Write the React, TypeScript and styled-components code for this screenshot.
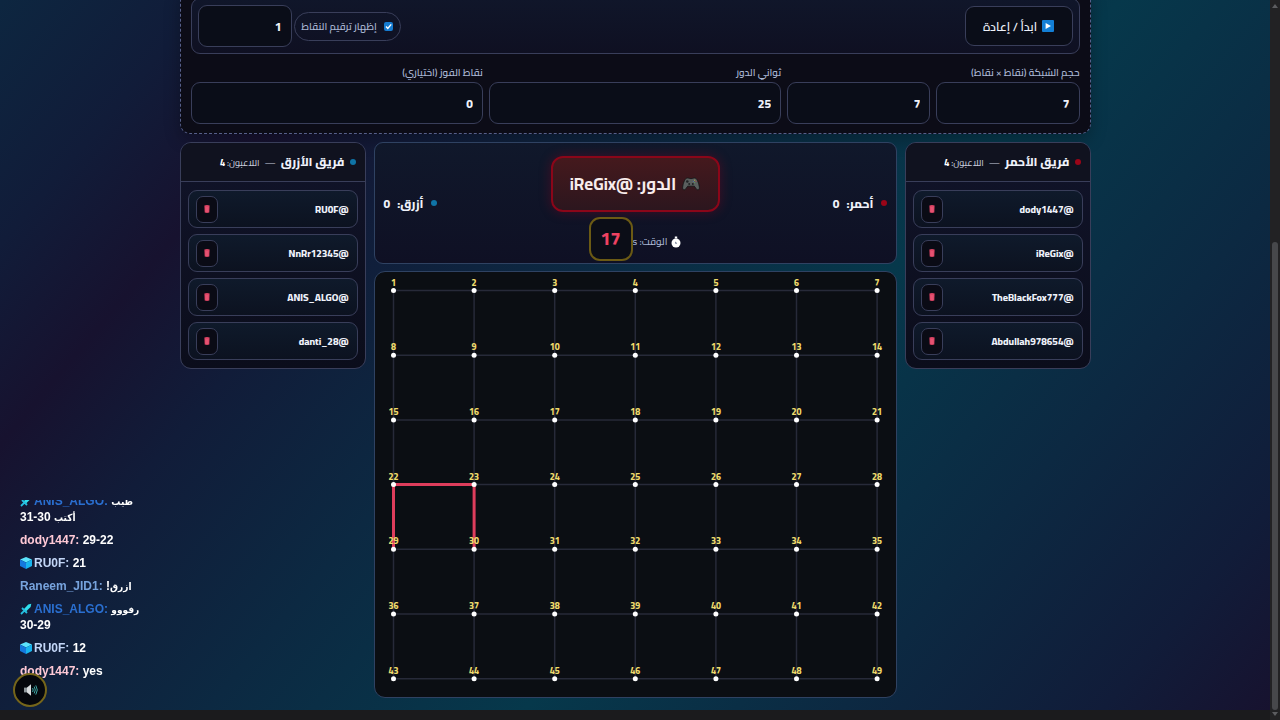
import React from "react";
import styled, { createGlobalStyle } from "styled-components";

const line = "#393e5a";
const uiFont = `"Cairo", "Open Sans", "Noto Sans", "DejaVu Sans", sans-serif`;

const GlobalStyle = createGlobalStyle`
  * { box-sizing: border-box; }
  html, body { margin: 0; background: #1b1b1d; }
  body { font-family: ${uiFont}; color: #eef1fa; }
  button, input { font-family: inherit; color: inherit; }
`;

const Shell = styled.div`
  display: grid;
  grid-template-columns: minmax(0, 1fr) 10px;
  grid-template-rows: minmax(0, 1fr) 10px;
  min-height: 100vh;
  overflow: hidden;
`;

const Page = styled.div`
  overflow: hidden;
  background: linear-gradient(
    130deg,
    #06384b -20%,
    #0c2942 -3%,
    #111c39 11%,
    #17122f 20%,
    #111c39 29%,
    #0c2942 43%,
    #06384b 60%,
    #0c2942 77%,
    #111c39 91%,
    #17122f 100%
  );
`;

const ScrollTrack = styled.div`
  grid-row: 1 / span 2;
  grid-column: 2;
  display: flex;
  flex-direction: column;
  align-items: center;
  justify-content: space-between;
  background: #222224;
  padding: 4px 0;
`;

const ScrollThumb = styled.div`
  flex: 1;
  width: 6px;
  margin: 234px 0 2px;
  border-radius: 3px;
  background: #47484b;
`;

const Main = styled.main`
  direction: rtl;
  width: calc(100% - 32px);
  max-width: 911px;
  margin: -13px auto 0;
  padding-bottom: 12px;
  display: flex;
  flex-direction: column;
  gap: 8px;
`;

const Settings = styled.section`
  display: flex;
  flex-direction: column;
  gap: 10px;
  padding: 10px 10px 9px;
  border: 1px dashed #565f8a;
  border-radius: 10px;
  background: #0c0c17;
  box-shadow: 0 6px 16px rgba(0, 0, 0, 0.25);
`;

const Toolbar = styled.div`
  display: flex;
  align-items: center;
  gap: 2px;
  padding: 6px;
  border: 1px solid ${line};
  border-radius: 9px;
  background: linear-gradient(#10162a, #0f1022);
`;

const Spacer = styled.div`
  flex: 1;
`;

const StartButton = styled.button`
  display: flex;
  align-items: center;
  justify-content: center;
  gap: 5px;
  width: 108px;
  height: 40px;
  padding: 0;
  border: 1px solid ${line};
  border-radius: 9px;
  background: #0a0d18;
  font-size: 12px;
  font-weight: 600;
  white-space: nowrap;
`;

const CheckPill = styled.label`
  display: flex;
  align-items: center;
  justify-content: center;
  gap: 7px;
  width: 107px;
  height: 29px;
  border: 1px solid ${line};
  border-radius: 15px;
  color: #a9b6d3;
  font-size: 10px;
  font-weight: 600;
  white-space: nowrap;
`;

const Check = styled.input`
  appearance: none;
  width: 9px;
  height: 9px;
  margin: 0;
  border-radius: 2px;
  background: #157bd0
    url("data:image/svg+xml,%3Csvg xmlns='http://www.w3.org/2000/svg' viewBox='0 0 9 9'%3E%3Cpath d='M2 4.6 3.8 6.5 7.2 2.4' fill='none' stroke='white' stroke-width='1.4'/%3E%3C/svg%3E");
`;

const NumberBox = styled.input<{ $width?: string }>`
  width: ${(p) => p.$width ?? "100%"};
  min-width: 0;
  height: 42px;
  padding: 0 9px;
  border: 1px solid ${line};
  border-radius: 9px;
  background: #0a0d18;
  font-size: 12px;
  font-weight: 800;
  text-align: right;
`;

const Fields = styled.div`
  display: grid;
  grid-template-columns: repeat(3, minmax(0, 1fr));
  gap: 6px;
`;

const Field = styled.div`
  display: flex;
  flex-direction: column;
`;

const FieldLabel = styled.label`
  height: 18px;
  color: #a9b6d3;
  font-size: 10px;
  font-weight: 600;
  line-height: 18px;
  white-space: nowrap;
`;

const Pair = styled.div`
  display: grid;
  grid-template-columns: 1fr 1fr;
  gap: 6px;
`;

const Columns = styled.div`
  display: grid;
  grid-template-columns: 186px minmax(0, 1fr) 186px;
  align-items: start;
  gap: 8px;
`;

const TeamCard = styled.section`
  border: 1px solid ${line};
  border-radius: 11px;
  background: linear-gradient(#11142a, #0b0d1b);
`;

const TeamHeader = styled.header`
  display: flex;
  align-items: center;
  gap: 5px;
  height: 39px;
  padding: 0 9px;
  border-bottom: 1px solid ${line};
  border-radius: 10px 10px 0 0;
  background: #10121f;
  white-space: nowrap;
`;

const Dot = styled.span<{ $color: string }>`
  flex: none;
  width: 6px;
  height: 6px;
  border-radius: 50%;
  background: ${(p) => p.$color};
`;

const TeamName = styled.h2`
  margin: 0;
  font-size: 12px;
  line-height: 20px;
  font-weight: 800;
`;

const TeamDash = styled.span`
  color: #c9cede;
  font-size: 10px;
`;

const TeamCount = styled.span`
  color: #c9cede;
  font-size: 9px;
  font-weight: 500;

  b {
    color: #ffffff;
    font-weight: 800;
  }
`;

const Players = styled.ul`
  display: flex;
  flex-direction: column;
  gap: 6px;
  margin: 0;
  padding: 8px 7px;
  list-style: none;
`;

const Player = styled.li`
  display: flex;
  align-items: center;
  justify-content: space-between;
  height: 38px;
  padding: 0 8px 0 7px;
  border: 1px solid ${line};
  border-radius: 9px;
  background: linear-gradient(#0f1a2b, #0c1220);
  font-size: 10px;
  font-weight: 800;
`;

const DeleteButton = styled.button`
  display: flex;
  align-items: center;
  justify-content: center;
  width: 22px;
  height: 27px;
  padding: 0;
  border: 1px solid ${line};
  border-radius: 7px;
  background: #0a0b15;
`;

const Center = styled.div`
  display: flex;
  flex-direction: column;
  gap: 7px;
`;

const Status = styled.section`
  display: grid;
  grid-template-columns: 1fr auto 1fr;
  align-items: center;
  height: 122px;
  padding: 0 9px;
  border: 1px solid #2f4262;
  border-radius: 9px;
  background: linear-gradient(#10182b, #0f1024);
`;

const Score = styled.div<{ $end?: boolean }>`
  display: flex;
  align-items: center;
  justify-content: ${(p) => (p.$end ? "flex-end" : "flex-start")};
  gap: 7px;
  font-size: 12px;
  font-weight: 800;
`;

const TurnStack = styled.div`
  display: flex;
  flex-direction: column;
  align-items: center;
  gap: 5px;
  padding-top: 10px;
`;

const Turn = styled.div`
  display: flex;
  align-items: center;
  justify-content: center;
  gap: 6px;
  min-width: 169px;
  height: 56px;
  padding: 0 16px;
  border: 2px solid #8b0619;
  border-radius: 12px;
  background: linear-gradient(#45191d, #2c161e);
  box-shadow: 0 0 12px rgba(160, 0, 30, 0.35);
  color: #f8ecec;
  font-size: 17px;
  font-weight: 700;
  white-space: nowrap;
`;

const Timer = styled.div`
  display: flex;
  align-items: center;
  color: #a9b6d3;
  font-size: 10px;
  font-weight: 500;
`;

const TimerText = styled.span`
  display: flex;
  align-items: center;
  gap: 4px;
  padding-top: 6px;
`;

const Seconds = styled.strong`
  display: grid;
  place-items: center;
  width: 44px;
  height: 44px;
  border: 2px solid #6b5a14;
  border-radius: 11px;
  background: #0b0d17;
  color: #ee4262;
  font-size: 18px;
  font-weight: 800;
`;

const Board = styled.section`
  border: 1px solid #2f4262;
  border-radius: 11px;
  background: #0b0e13;

  svg {
    display: block;
    width: 100%;
    height: auto;
    font-family: ${uiFont};
    font-size: 9px;
    font-weight: 800;
  }
`;

const Chat = styled.div`
  position: fixed;
  left: 20px;
  bottom: 41px;
  display: flex;
  flex-direction: column;
  justify-content: flex-end;
  gap: 7px;
  width: 140px;
  height: 179px;
  overflow: hidden;
  font: 700 12px/16px "Liberation Sans", "DejaVu Sans", sans-serif;
  color: #ffffff;
`;

const Message = styled.p`
  flex: none;
  margin: 0;

  svg {
    margin-right: 2px;
    vertical-align: -2px;
  }
`;

const Nick = styled.span<{ $color: string }>`
  color: ${(p) => p.$color};
`;

const Arabic = styled.span`
  font-family: "DejaVu Sans Condensed", "DejaVu Sans", sans-serif;
  font-size: 10px;
  line-height: 1;
`;

const SoundButton = styled.button`
  position: fixed;
  left: 13px;
  bottom: 13px;
  display: grid;
  place-items: center;
  width: 34px;
  height: 34px;
  padding: 0;
  border: 2px solid #75651a;
  border-radius: 50%;
  background: #05070d;
`;

const PlayIcon = () => (
  <svg width="12" height="12" viewBox="0 0 12 12" aria-hidden="true">
    <rect width="12" height="12" rx="1" fill="#137fd6" />
    <path d="M3.6 3v6l5.4-3z" fill="#fff" />
  </svg>
);

const TrashIcon = () => (
  <svg width="8" height="10" viewBox="0 0 8 10" aria-hidden="true">
    <path d="M1.4 1.6Q4 .6 6.600 1.600L6.300 8.600Q4 9.400 1.700 8.600z" fill="#df4566" />
    <path d="M3.200 3v5M4.800 3v5" stroke="#ee6f8a" strokeWidth=".5" />
  </svg>
);

const GamepadIcon = () => (
  <svg width="18" height="14" viewBox="0 0 18 14" aria-hidden="true">
    <path
      d="M4.5 1.2C6 .6 7 1.6 9 1.6s3-1 4.5-.4c2 .8 3.6 6 3.9 9.200.2 2.600-2 3.200-3.300 1.300L12.300 9.200H5.700L3.900 11.700C2.600 13.600.4 13 .6 10.400.9 7.200 2.500 2 4.500 1.200z"
      fill="#5a5f5e"
      stroke="#151718"
      strokeWidth=".9"
    />
    <circle cx="5.300" cy="4.500" r="1.300" fill="#202425" />
    <circle cx="7.200" cy="7" r="1" fill="#202425" />
    <circle cx="10.800" cy="7" r="1" fill="#202425" />
    <circle cx="12.700" cy="3.200" r=".6" fill="#b8a748" />
    <circle cx="14" cy="4.500" r=".6" fill="#b5484c" />
    <circle cx="12.700" cy="5.700" r=".6" fill="#5c9a62" />
    <circle cx="11.400" cy="4.500" r=".6" fill="#5279a8" />
  </svg>
);

const StopwatchIcon = () => (
  <svg width="10" height="12" viewBox="0 0 10 12" aria-hidden="true">
    <path d="M3.800.5h2.400v2H3.800z" fill="#fff" />
    <circle cx="5" cy="7" r="4.500" fill="#fff" />
    <path d="M4 5.400 6.200 7.200 4.600 8z" fill="#55617c" />
  </svg>
);

const CubeIcon = () => (
  <svg width="12" height="12" viewBox="0 0 12 12" aria-hidden="true">
    <path d="M6 0 12 2.600 6 5.400 0 2.600z" fill="#5be3fb" />
    <path d="M0 2.600 6 5.400V12L0 9z" fill="#1478dc" />
    <path d="M12 2.600 6 5.400V12l6-3z" fill="#17b4ee" />
  </svg>
);

const SwordIcon = () => (
  <svg width="12" height="12" viewBox="0 0 12 12" aria-hidden="true">
    <path d="M11.300.8 10.600 4 6 8.400 3.800 6.200 8.200 1.500z" fill="#2fe0ee" />
    <path d="M2 5l5 5M4.400 7.600 1 11" stroke="#25bfe0" strokeWidth="1.800" />
  </svg>
);

const SpeakerIcon = () => (
  <svg width="15" height="14" viewBox="0 0 15 14" aria-hidden="true">
    <path d="M1 4.600h3v4.800H1z" fill="#8f979c" />
    <path d="M4 4.600 8 1.200v11.600L4 9.400z" fill="#d9dde0" />
    <path
      d="M9.600 5q1.200 2 0 4M11.200 3.600q2.200 3.400 0 6.800M12.800 2.400q3 4.600 0 9.200"
      fill="none"
      stroke="#3fa7a5"
      strokeWidth="1"
    />
  </svg>
);

const Arrow = ({ up }: { up?: boolean }) => (
  <svg width="6" height="4" viewBox="0 0 6 4" aria-hidden="true">
    <path d={up ? "M0 4 3 0l3 4z" : "M0 0l3 4 3-4z"} fill="#5c5d60" />
  </svg>
);

const RED = "#9a0518";
const BLUE = "#0f74a6";

function Team({ name, color, players }: { name: string; color: string; players: string[] }) {
  return (
    <TeamCard>
      <TeamHeader>
        <Dot $color={color} />
        <TeamName>{name}</TeamName>
        <TeamDash>—</TeamDash>
        <TeamCount>
          اللاعبون: <b>{players.length}</b>
        </TeamCount>
      </TeamHeader>
      <Players>
        {players.map((player) => (
          <Player key={player}>
            <span>@{player}</span>
            <DeleteButton aria-label={`حذف ${player}`}>
              <TrashIcon />
            </DeleteButton>
          </Player>
        ))}
      </Players>
    </TeamCard>
  );
}

const SIZE = 7;
const px = (c: number) => 18.5 + c * 80.6;
const py = (r: number) => 18.5 + r * 64.7;
const steps = Array.from({ length: SIZE }, (_, i) => i);

// Claimed edges as [column, row] pairs
const claimed = [
  [0, 3, 1, 3],
  [0, 3, 0, 4],
  [1, 3, 1, 4],
];

function DotGrid() {
  return (
    <svg viewBox="0 0 521 425" role="img" aria-label="لوحة النقاط">
      <g stroke="#272a39" strokeWidth="1.500">
        {steps.map((i) => (
          <React.Fragment key={i}>
            <line x1={px(0)} x2={px(6)} y1={py(i)} y2={py(i)} />
            <line x1={px(i)} x2={px(i)} y1={py(0)} y2={py(6)} />
          </React.Fragment>
        ))}
      </g>
      <g stroke="#de3d5c" strokeWidth="3">
        {claimed.map(([a, b, c, d]) => (
          <line key={`${a}${b}${c}${d}`} x1={px(a)} y1={py(b)} x2={px(c)} y2={py(d)} />
        ))}
      </g>
      {steps.map((r) =>
        steps.map((c) => (
          <g key={`${r}-${c}`}>
            <circle cx={px(c)} cy={py(r)} r="2.500" fill="#fff" />
            <text x={px(c)} y={py(r) - 5} textAnchor="middle" fill="#eeda6c">
              {r * SIZE + c + 1}
            </text>
          </g>
        )),
      )}
    </svg>
  );
}

export default function App() {
  return (
    <>
      <GlobalStyle />
      <Shell>
        <Page>
          <Main>
            <Settings>
              <Toolbar>
                <StartButton>
                  <PlayIcon />
                  ابدأ / إعادة
                </StartButton>
                <Spacer />
                <CheckPill>
                  <Check type="checkbox" defaultChecked />
                  إظهار ترقيم النقاط
                </CheckPill>
                <NumberBox $width="94px" aria-label="البداية" defaultValue="1" />
              </Toolbar>
              <Fields>
                <Field>
                  <FieldLabel htmlFor="cols">حجم الشبكة (نقاط × نقاط)</FieldLabel>
                  <Pair>
                    <NumberBox id="cols" defaultValue="7" />
                    <NumberBox aria-label="عدد الصفوف" defaultValue="7" />
                  </Pair>
                </Field>
                <Field>
                  <FieldLabel htmlFor="seconds">ثواني الدور</FieldLabel>
                  <NumberBox id="seconds" defaultValue="25" />
                </Field>
                <Field>
                  <FieldLabel htmlFor="goal">نقاط الفوز (اختياري)</FieldLabel>
                  <NumberBox id="goal" defaultValue="0" />
                </Field>
              </Fields>
            </Settings>
            <Columns>
              <Team
                name="فريق الأحمر"
                color={RED}
                players={["dody1447", "iReGix", "TheBlackFox777", "Abdullah978654"]}
              />
              <Center>
                <Status>
                  <Score>
                    <Dot $color={RED} />
                    <span>أحمر:</span>
                    <span>0</span>
                  </Score>
                  <TurnStack>
                    <Turn>
                      <GamepadIcon />
                      <span>الدور: @iReGix</span>
                    </Turn>
                    <Timer>
                      <TimerText>
                        <StopwatchIcon />
                        <span>الوقت: s</span>
                      </TimerText>
                      <Seconds>17</Seconds>
                    </Timer>
                  </TurnStack>
                  <Score $end>
                    <Dot $color={BLUE} />
                    <span>أزرق:</span>
                    <span>0</span>
                  </Score>
                </Status>
                <Board>
                  <DotGrid />
                </Board>
              </Center>
              <Team
                name="فريق الأزرق"
                color={BLUE}
                players={["RU0F", "NnRr12345", "ANIS_ALGO", "danti_28"]}
              />
            </Columns>
          </Main>
        </Page>
        <ScrollTrack>
          <Arrow up />
          <ScrollThumb />
          <Arrow />
        </ScrollTrack>
      </Shell>
      <Chat>
        <Message>
          <SwordIcon />
          <Nick $color="#2a6fd0">ANIS_ALGO:</Nick> <Arabic>طيب</Arabic>
          <br />
          <Arabic>أكتب</Arabic> 30-31
        </Message>
        <Message>
          <Nick $color="#ffc9d6">dody1447:</Nick> 29-22
        </Message>
        <Message>
          <CubeIcon />
          <Nick $color="#c3d6f7">RU0F:</Nick> 21
        </Message>
        <Message>
          <Nick $color="#77a3dd">Raneem_JID1:</Nick> !<Arabic>ازرق</Arabic>
        </Message>
        <Message>
          <SwordIcon />
          <Nick $color="#2a6fd0">ANIS_ALGO:</Nick> <Arabic>رفووو</Arabic>
          <br />
          30-29
        </Message>
        <Message>
          <CubeIcon />
          <Nick $color="#c3d6f7">RU0F:</Nick> 12
        </Message>
        <Message>
          <Nick $color="#ffc9d6">dody1447:</Nick> yes
        </Message>
      </Chat>
      <SoundButton aria-label="الصوت">
        <SpeakerIcon />
      </SoundButton>
    </>
  );
}
